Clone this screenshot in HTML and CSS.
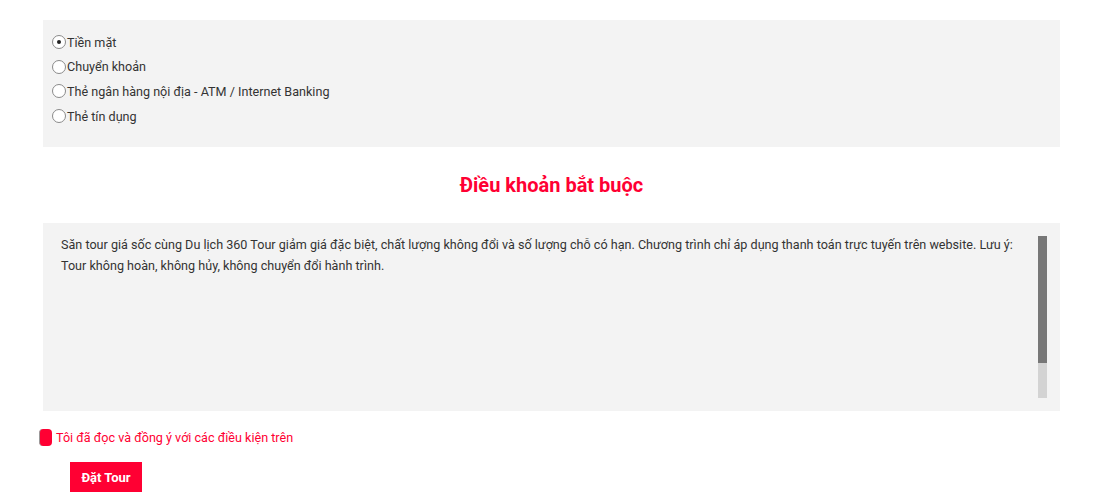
FILE: index.html
```html
<!DOCTYPE html>
<html lang="vi">
<head>
    <meta charset="UTF-8">
    <meta name="viewport" content="width=device-width, initial-scale=1.0">
    <title>Đặt Tour - Thanh toán</title>
    <link rel="stylesheet" href="styles.css">
</head>
<body>
    <div class="booking">
        <div class="payment-box">
            <label class="radio-row"><span class="radio checked"></span>Tiền mặt</label>
            <label class="radio-row"><span class="radio"></span>Chuyển khoản</label>
            <label class="radio-row"><span class="radio"></span>Thẻ ngân hàng nội địa - ATM / Internet Banking</label>
            <label class="radio-row"><span class="radio"></span>Thẻ tín dụng</label>
        </div>

        <h2 class="terms-title">Điều khoản bắt buộc</h2>

        <div class="terms-box">
            <div class="terms-text">
                Săn tour giá sốc cùng Du lịch 360 Tour giảm giá đặc biệt, chất lượng không đổi và số lượng chỗ có hạn. Chương trình chỉ áp dụng thanh toán trực tuyến trên website. Lưu ý: Tour không hoàn, không hủy, không chuyển đổi hành trình.
            </div>
            <div class="scroll-track"><div class="scroll-thumb"></div></div>
        </div>

        <label class="agree"><span class="agree-box"></span>Tôi đã đọc và đồng ý với các điều kiện trên</label>

        <button class="btn-book">Đặt Tour</button>
    </div>
</body>
</html>
```
FILE: styles.css
```css
:root {
    --red: #ff0033;
    --text-color: #333;
    --box-bg: #f3f3f3;
}

body {
    margin: 0;
    font-family: Roboto, 'Liberation Sans', Arial, sans-serif;
    font-size: 12.6px;
    color: var(--text-color);
    background: #fff;
}

.booking {
    padding: 20px 41px 0 43px;
}

.payment-box {
    background: var(--box-bg);
    padding: 10px 9px 19px;
    display: flex;
    flex-direction: column;
}

.radio-row {
    display: flex;
    align-items: center;
    height: 24.6px;
}

.radio {
    width: 12px;
    height: 12px;
    border: 1px solid #8a8a8a;
    border-radius: 50%;
    background: #fff;
    display: flex;
    align-items: center;
    justify-content: center;
    margin-right: 1px;
}

.radio.checked::after {
    content: "";
    width: 4px;
    height: 4px;
    border-radius: 50%;
    background: #222;
}

.terms-title {
    margin: 0;
    padding: 23px 0 23px;
    text-align: center;
    color: var(--red);
    font-size: 20px;
    font-weight: 700;
    line-height: 30px;
}

.terms-box {
    background: var(--box-bg);
    height: 162px;
    padding: 13px;
    display: flex;
    gap: 9px;
}

.terms-text {
    flex: 1;
    padding: 0 0 0 5px;
    line-height: 21px;
    margin-top: -2px;
}

.scroll-track {
    width: 9px;
    background: #d3d3d3;
}

.scroll-thumb {
    height: 127px;
    background: #777;
}

.agree {
    display: flex;
    align-items: center;
    gap: 4px;
    margin: 17px 0 0 -4px;
    color: var(--red);
    height: 18px;
}

.agree-box {
    width: 12px;
    height: 17px;
    border-radius: 4px;
    background: var(--red);
    border-left: 1px solid #999;
}

.btn-book {
    margin: 16px 0 0 27px;
    width: 72px;
    height: 30px;
    border: none;
    background: var(--red);
    color: #fff;
    font-family: inherit;
    font-size: 13px;
    font-weight: 700;
    cursor: pointer;
}
```
